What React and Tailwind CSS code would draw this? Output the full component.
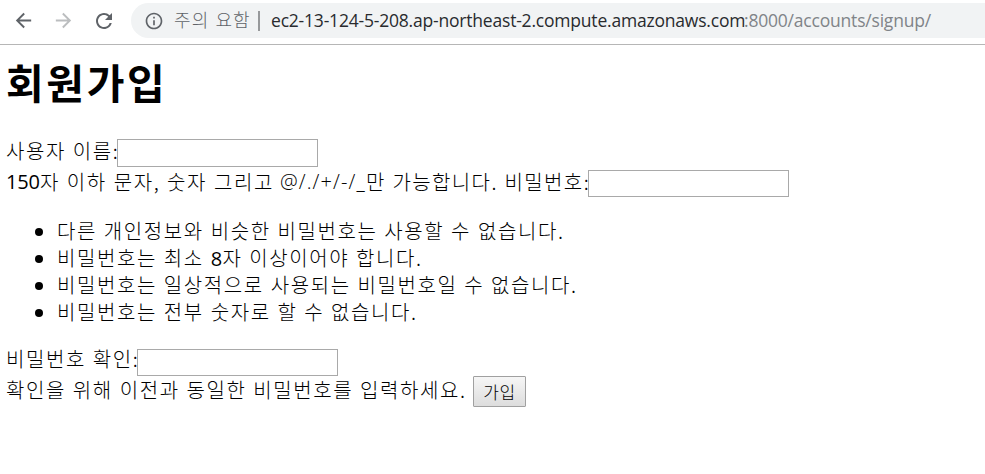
const rules = [
  '다른 개인정보와 비슷한 비밀번호는 사용할 수 없습니다.',
  null,
  '비밀번호는 일상적으로 사용되는 비밀번호일 수 없습니다.',
  '비밀번호는 전부 숫자로 할 수 없습니다.',
];

function TextField({ className, label, type = 'text' }) {
  return (
    <input
      type={type}
      aria-label={label}
      className={`w-[201px] shrink-0 border border-[#a9a9a9] bg-white px-1 outline-none ${className}`}
    />
  );
}

function Toolbar() {
  return (
    <header className="flex h-[45px] items-start border-b border-[#b6b6b6] pl-[12px]">
      <svg className="mt-[9px] size-[23px] shrink-0" viewBox="0 0 24 24" fill="#5f6368">
        <path d="M20 11H7.83l5.59-5.59L12 4l-8 8 8 8 1.41-1.41L7.83 13H20v-2z" />
      </svg>
      <svg className="mt-[9px] ml-[17px] size-[23px] shrink-0" viewBox="0 0 24 24" fill="#bbbdbf">
        <path d="m12 4-1.41 1.41L16.17 11H4v2h12.17l-5.58 5.59L12 20l8-8z" />
      </svg>
      <svg className="mt-[9px] ml-[17px] size-[24px] shrink-0" viewBox="0 0 24 24" fill="#5f6368">
        <path d="M17.65 6.35A7.958 7.958 0 0 0 12 4c-4.42 0-7.99 3.58-7.99 8s3.57 8 7.99 8c3.73 0 6.84-2.55 7.73-6h-2.08A5.99 5.99 0 0 1 12 18c-3.31 0-6-2.69-6-6s2.69-6 6-6c1.66 0 3.14.69 4.22 1.78L13 11h7V4l-2.35 2.35z" />
      </svg>
      <div className="mt-[3px] ml-[15px] flex h-[35px] flex-1 items-center rounded-l-full bg-[#f1f3f4] pl-[13px] whitespace-pre">
        <svg className="size-[20px] shrink-0" viewBox="0 0 24 24" fill="#5f6368">
          <path d="M11 17h2v-6h-2v6zm1-15C6.48 2 2 6.48 2 12s4.48 10 10 10 10-4.48 10-10S17.52 2 12 2zm0 18c-4.41 0-8-3.59-8-8s3.59-8 8-8 8 3.59 8 8-3.59 8-8 8zM11 9h2V7h-2v2z" />
        </svg>
        <span className="mb-[3px] ml-[10px] w-[81px] text-[18px] leading-[32px] font-light tracking-[1.1px] [word-spacing:1px] text-[#5f6368]">주의 요함</span>
        <span className="ml-[3px] h-[20px] w-[2px] bg-[#97999b]" />
        <span className="ml-[11px] w-[473px] font-['Open_Sans',sans-serif] text-[17.5px] tracking-[-0.2px] text-[#292b2e]">ec2-13-124-5-208.ap-northeast-2.compute.amazonaws.com</span>
        <span className="font-['Open_Sans',sans-serif] text-[17.5px] tracking-[-0.2px] text-[#808488]">:8000/accounts/signup/</span>
      </div>
    </header>
  );
}

export default function App() {
  return (
    <div className="h-[474px] overflow-hidden bg-white font-['Noto_Sans_CJK_KR',sans-serif] text-black">
      <Toolbar />
      <main className="pl-[6px] text-[20px] leading-[27px] font-light tracking-[1.6px] whitespace-pre [word-spacing:0.8px]">
        <h1 className="mt-[8px] h-[56px] text-[41px] leading-[56px] font-bold tracking-[2.6px]">회원가입</h1>
        <form onSubmit={(e) => e.preventDefault()}>
          <div className="mt-[28px] flex h-[31px] items-start">
            <label className="w-[111px]">사용자 이름:</label>
            <TextField label="사용자 이름" className="mt-[2px] h-[28px]" />
          </div>
          <div className="flex h-[31px] items-start">
            <span className="w-[34px] font-['Open_Sans',sans-serif] font-normal tracking-[-0.2px]">150</span>
            <span className="w-[240px]">자 이하 문자, 숫자 그리고</span>
            <span className="w-[86px] font-['Open_Sans',sans-serif] tracking-[1.1px]">@/./+/-/_</span>
            <span className="w-[222px] tracking-[1.4px]">만 가능합니다. 비밀번호:</span>
            <TextField label="비밀번호" type="password" className="mt-[2px] h-[27px]" />
          </div>
          <ul className="mt-[18px] list-disc pl-[51px]">
            {rules.map((rule, i) => (
              <li key={i} className="h-[27px]">
                {rule ?? (
                  <>
                    비밀번호는 최소 <span className="font-['Open_Sans',sans-serif] font-normal tracking-[0.3px]">8</span>자 이상이어야 합니다.
                  </>
                )}
              </li>
            ))}
          </ul>
          <div className="mt-[20px] flex h-[31px] items-start">
            <label className="w-[131px]">비밀번호 확인:</label>
            <TextField label="비밀번호 확인" type="password" className="mt-[4px] h-[27px]" />
          </div>
          <div className="flex items-start">
            <span className="w-[467px]">확인을 위해 이전과 동일한 비밀번호를 입력하세요.</span>
            <button className="h-[31px] w-[53px] rounded-[1px] border border-[#a0a0a0] bg-linear-to-b from-[#f6f6f6] to-[#dddddd] text-[17px] leading-[29px] tracking-[0.6px]">가입</button>
          </div>
        </form>
      </main>
    </div>
  );
}
